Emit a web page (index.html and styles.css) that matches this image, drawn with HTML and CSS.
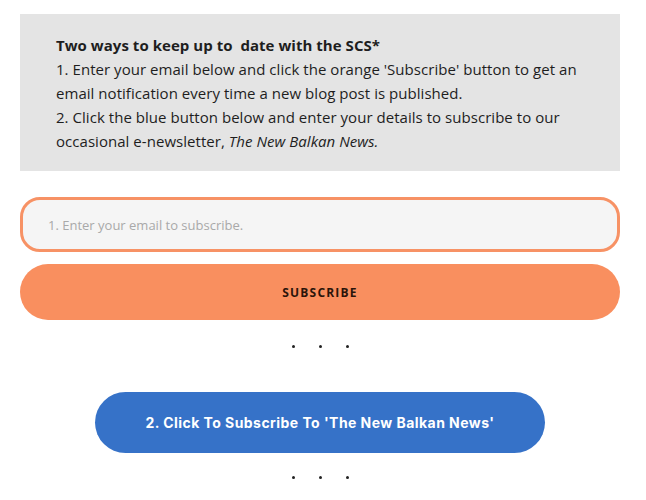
FILE: index.html
```html
<!DOCTYPE html>
<html>
<head>
<meta charset="utf-8">
<link rel="stylesheet" href="styles.css">
</head>
<body>
<div class="wrap">
  <div class="info">
    <p><strong>Two ways to keep up to&nbsp; date with the SCS*</strong><br>
    1. Enter your email below and click the orange 'Subscribe' button to get an email notification every time a new blog post is published.<br>
    2. Click the blue button below and enter your details to subscribe to our occasional e-newsletter, <em>The New Balkan News.</em></p>
  </div>
  <form class="sub">
    <input class="email" type="email" placeholder="1. Enter your email to subscribe.">
    <button class="btn-sub" type="button">SUBSCRIBE</button>
  </form>
  <div class="dots"><span></span><span></span><span></span></div>
  <div class="blue-row"><a class="btn-blue" href="#">2. Click To Subscribe To 'The New Balkan News'</a></div>
  <div class="dots dots2"><span></span><span></span><span></span></div>
</div>
</body>
</html>
```
FILE: styles.css
```css
html, body { margin: 0; padding: 0; background: #fff; }
body { font-family: "Open Sans", "Noto Sans", sans-serif; color: #1e1e1e; }
.wrap { width: 600px; margin-left: 20px; padding-top: 14px; }
.info { background: #e4e4e4; padding: 19px 36px 18px 36px; }
.info p { margin: 0; font-size: 15px; line-height: 24px; letter-spacing: 0.04px; }
.info strong { font-weight: 700; }
.sub { margin-top: 26px; display: flex; flex-direction: column; gap: 12px; }
.email {
  box-sizing: border-box; height: 55px; width: 600px;
  border: 3px solid #f79265; border-radius: 20px; background: #f5f5f5;
  padding: 0 25px; font-family: "Open Sans", sans-serif; font-size: 13px; outline: none;
}
.email::placeholder { color: #a9a9a9; }
.btn-sub {
  height: 56px; width: 600px; border: none; border-radius: 28px; background: #f98f5f;
  font-family: "Open Sans", sans-serif; font-weight: 700; font-size: 12px; letter-spacing: 1.2px; color: #2a140a;
  padding-top: 2px;
}
.dots { display: flex; justify-content: center; gap: 24px; margin-top: 24px; height: 4px; align-items: center; }
.dots span { width: 3px; height: 3px; border-radius: 50%; background: #222; }
.blue-row { display: flex; justify-content: center; margin-top: 44px; }
.btn-blue {
  display: flex; align-items: center; justify-content: center;
  width: 450px; height: 61px; border-radius: 31px; background: #3672c8;
  color: #fff; text-decoration: none; font-family: Inter, sans-serif; font-weight: 700; font-size: 14px; letter-spacing: 0.45px;
}
.dots2 { margin-top: 22px; }
```
